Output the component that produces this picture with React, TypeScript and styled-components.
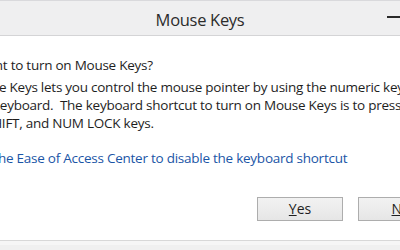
import React from "react";
import styled, { createGlobalStyle } from "styled-components";

const Global = createGlobalStyle`
  html, body { margin: 0; padding: 0; background: #ffffff; }
  body { width: 400px; height: 250px; overflow: hidden; font-family: "Open Sans", "Noto Sans", sans-serif; }
`;

const Window = styled.div`
  width: 400px;
  height: 250px;
  display: flex;
  flex-direction: column;
  overflow: hidden;
  background: #ffffff;
`;

const TitleBar = styled.div`
  height: 36px;
  flex: none;
  box-sizing: border-box;
  display: flex;
  align-items: center;
  justify-content: center;
  position: relative;
  background: #efeff0;
  border-top: 1px solid #d9d9dc;
  border-bottom: 1px solid #d4d4d6;
`;

const Title = styled.span`
  font-size: 16.5px;
  letter-spacing: -0.3px;
  color: #2b2b2b;
  margin-top: 2px;
`;

const Minimize = styled.span`
  position: absolute;
  right: -4px;
  top: 15px;
  width: 17px;
  height: 2px;
  background: #2a2a2a;
`;

const Body = styled.div`
  flex: 1;
  display: flex;
  flex-direction: column;
  overflow: hidden;
`;

const Content = styled.div`
  padding-top: 20px;
  font-size: 13.5px;
  letter-spacing: -0.25px;
  line-height: 18px;
  color: #1e1e1e;
  white-space: nowrap;
`;

const Question = styled.p`
  margin: 0 0 4px 0;
`;

const Paragraph = styled.p`
  margin: 0;
`;

const Line = styled.span<{ $crop: number }>`
  display: block;
  margin-left: ${(p) => -p.$crop}px;
`;

const Link = styled.a<{ $crop: number }>`
  display: block;
  margin-top: 17px;
  margin-left: ${(p) => -p.$crop}px;
  color: #1a55a6;
  text-decoration: none;
`;

const ButtonRow = styled.div`
  display: flex;
  gap: 15px;
  padding-left: 257px;
  margin-top: 30px;
`;

const Button = styled.button`
  width: 86px;
  height: 24px;
  flex: none;
  box-sizing: border-box;
  font-family: inherit;
  font-size: 14px;
  color: #1e1e1e;
  border: 1px solid #adadad;
  background: linear-gradient(#f2f2f2, #e6e6e6);
  padding: 0;
  line-height: 20px;
`;

const Accel = styled.span`
  text-decoration: underline;
`;

const Footer = styled.div`
  margin-top: auto;
  height: 10px;
  flex: none;
  box-sizing: border-box;
  background: #f0f0f0;
  border-top: 1px solid #d8d8d8;
  box-shadow: inset 0 4px 0 #f6f6f6;
`;

export default function App() {
  return (
    <>
      <Global />
      <Window>
        <TitleBar>
          <Title>Mouse Keys</Title>
          <Minimize />
        </TitleBar>
        <Body>
          <Content>
            <Question>
              <Line $crop={69}>Do you want to turn on Mouse Keys?</Line>
            </Question>
            <Paragraph>
              <Line $crop={35}>Mouse Keys lets you control the mouse pointer by using the numeric keypad on your</Line>
              <Line $crop={7}>keyboard.&nbsp; The keyboard shortcut to turn on Mouse Keys is to press LEFT ALT, LEFT</Line>
              <Line $crop={15}>SHIFT, and NUM LOCK keys.</Line>
            </Paragraph>
            <Link href="#" $crop={43}>
              Go to the Ease of Access Center to disable the keyboard shortcut
            </Link>
          </Content>
          <ButtonRow>
            <Button>
              <Accel>Y</Accel>es
            </Button>
            <Button>
              <Accel>N</Accel>o
            </Button>
          </ButtonRow>
          <Footer />
        </Body>
      </Window>
    </>
  );
}
